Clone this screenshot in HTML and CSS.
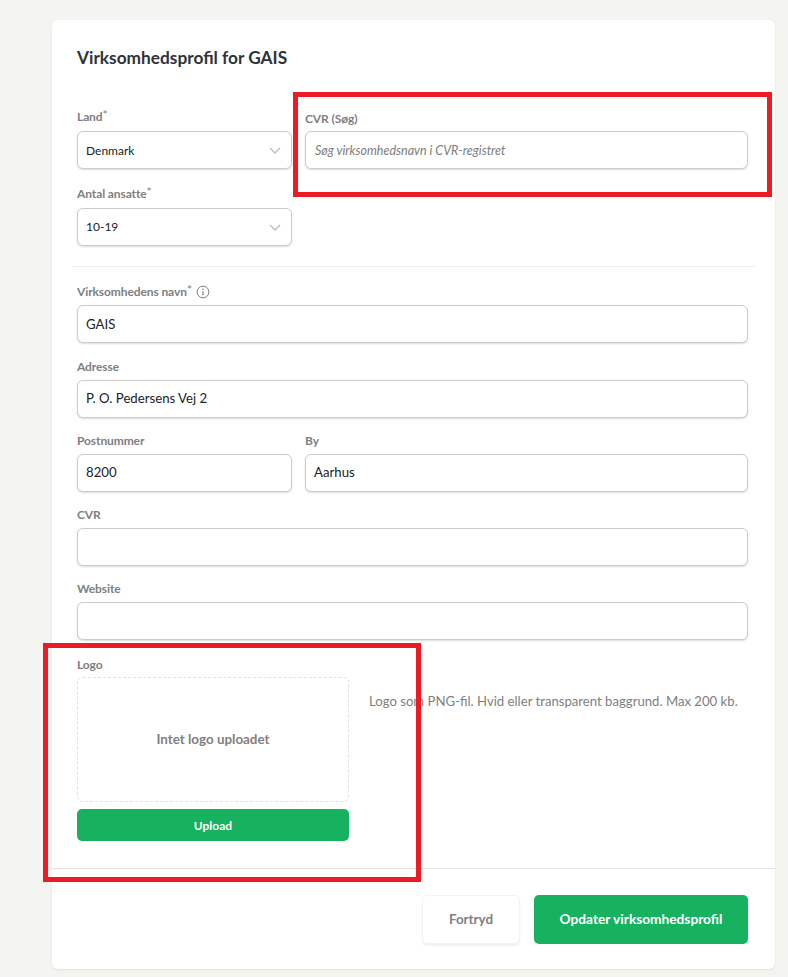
FILE: index.html
```html
<!DOCTYPE html>
<html lang="da">
<head>
<meta charset="utf-8">
<title>Virksomhedsprofil</title>
<link rel="stylesheet" href="styles.css">
</head>
<body>
<main class="card">
  <h1 class="title">Virksomhedsprofil for GAIS</h1>
  <section class="top-grid">
    <div class="field">
      <label class="label">Land<sup>*</sup></label>
      <div class="control select select-first small"><span>Denmark</span>
        <svg class="chev" viewBox="0 0 12 7" width="12" height="7"><path d="M1 1l5 5 5-5" fill="none" stroke="#bdbdbd" stroke-width="1.3"/></svg>
      </div>
    </div>
    <div class="field">
      <label class="label label-low">CVR (Søg)</label>
      <div class="control small placeholder">Søg virksomhedsnavn i CVR-registret</div>
    </div>
    <div class="field">
      <label class="label">Antal ansatte<sup>*</sup></label>
      <div class="control select small"><span>10-19</span>
        <svg class="chev" viewBox="0 0 12 7" width="12" height="7"><path d="M1 1l5 5 5-5" fill="none" stroke="#bdbdbd" stroke-width="1.3"/></svg>
      </div>
    </div>
  </section>
  <hr class="rule">
  <section class="stack">
    <div class="field field-first">
      <label class="label">Virksomhedens navn<sup>*</sup>
        <svg class="info" viewBox="0 0 14 14" width="14" height="14"><circle cx="7" cy="7" r="5.9" fill="none" stroke="#7d7d7d" stroke-width="1"/><path d="M7 6.2v4" stroke="#7d7d7d" stroke-width="1.2"/><circle cx="7" cy="4.2" r=".8" fill="#7d7d7d"/></svg>
      </label>
      <div class="control control-first">GAIS</div>
    </div>
    <div class="field">
      <label class="label">Adresse</label>
      <div class="control">P. O. Pedersens Vej 2</div>
    </div>
    <div class="pair">
      <div class="field">
        <label class="label">Postnummer</label>
        <div class="control">8200</div>
      </div>
      <div class="field">
        <label class="label">By</label>
        <div class="control">Aarhus</div>
      </div>
    </div>
    <div class="field">
      <label class="label">CVR</label>
      <div class="control"></div>
    </div>
    <div class="field">
      <label class="label">Website</label>
      <div class="control"></div>
    </div>
  </section>
  <section class="logo-row">
    <div class="logo-col">
      <label class="label">Logo</label>
      <div class="dropzone">Intet logo uploadet</div>
      <button class="upload" type="button">Upload</button>
    </div>
    <p class="hint">Logo som PNG-fil. Hvid eller transparent baggrund. Max 200 kb.</p>
  </section>
  <footer class="footer">
    <button class="btn cancel" type="button">Fortryd</button>
    <button class="btn primary" type="button">Opdater virksomhedsprofil</button>
  </footer>
  <div class="mark mark-cvr"></div>
  <div class="mark mark-logo"></div>
</main>
</body>
</html>
```
FILE: styles.css
```css
* { box-sizing: border-box; }
html, body { margin: 0; padding: 0; }
body {
  background: #f4f4f0;
  font-family: Lato, "Liberation Sans", sans-serif;
  height: 977px;
  overflow: hidden;
  padding: 20px 13px 8px 52px;
  color: #2b2b2b;
}
.card {
  background: #fff;
  border-radius: 6px;
  box-shadow: 0 1px 2px rgba(0,0,0,.08);
  height: 949px;
  padding: 28px 27px 0 25px;
}
.title {
  margin: 0;
  font-size: 17.3px;
  line-height: 20px;
  font-weight: 700;
  color: #2f3338;
}
.top-grid {
  margin-top: 42px;
  display: grid;
  grid-template-columns: 215px 443px;
  column-gap: 13px;
  row-gap: 18px;
}
.field { display: flex; flex-direction: column; }
.field-first { margin-bottom: 1px; }
.label {
  display: block;
  font-size: 12px;
  line-height: 14px;
  font-weight: 700;
  letter-spacing: -.1px;
  color: #808080;
  margin-bottom: 7px;
  white-space: nowrap;
}
.label-low { position: relative; top: 2px; }
.label sup { font-size: 12px; line-height: 0; font-weight: 400; vertical-align: 2px; }
.info { vertical-align: -3px; margin-left: 1px; }
.control {
  height: 38px;
  border: 1px solid #ccc;
  border-radius: 6px;
  background: #fff;
  box-shadow: 0 1px 2px rgba(0,0,0,.14);
  padding: 0 8px;
  font-size: 13.2px;
  line-height: 34px;
  color: #222;
}
.control-first { line-height: 36px; }
.small { font-size: 12px; }
.placeholder { font-style: italic; font-size: 12.5px; line-height: 38px; color: #7d7d7d; padding-left: 9px; }
.select { display: flex; align-items: center; justify-content: space-between; padding-right: 10px; }
.select-first span { padding-top: 2px; }
.rule {
  border: 0;
  height: 1px;
  background: #efefef;
  margin: 20px -7px 18px -5px;
}
.stack { display: flex; flex-direction: column; gap: 16px; }
.stack .label { margin-bottom: 6px; }
.pair { display: grid; grid-template-columns: 215px 443px; column-gap: 13px; }
.logo-row { display: flex; margin-top: 18px; }
.logo-col { width: 272px; flex: none; }
.logo-col .label { margin-bottom: 5px; }
.dropzone {
  height: 125px;
  border: 1px dashed #e2e2e2;
  border-radius: 6px;
  padding-bottom: 2px;
  display: flex;
  align-items: center;
  justify-content: center;
  font-size: 13.4px;
  font-weight: 700;
  color: #808080;
}
.upload {
  display: block;
  width: 100%;
  height: 32px;
  margin-top: 7px;
  border: 0;
  border-radius: 5px;
  background: #16b260;
  color: #fff;
  font: 700 12px Lato, sans-serif;
}
.hint {
  margin: 35px 0 0 20px;
  font-size: 13.15px;
  line-height: 17px;
  color: #808080;
  white-space: nowrap;
}
.footer {
  margin: 27px -27px 0 -25px;
  border-top: 1px solid #e6e6e6;
  padding: 26px 27px 0 0;
  display: flex;
  justify-content: flex-end;
  gap: 14px;
}
.btn {
  height: 49px;
  padding-bottom: 3px;
  border-radius: 5px;
  font: 700 13.7px Lato, sans-serif;
}
.cancel {
  width: 98px;
  border: 1px solid #f3f3f3;
  background: #fff;
  color: #808080;
  box-shadow: 0 2px 2px rgba(0,0,0,.06);
  font-size: 13.4px;
}
.primary { width: 214px; border: 0; background: #16b260; color: #fff; }
.mark { position: absolute; border: 5px solid #ed1c24; pointer-events: none; }
.mark-cvr { left: 293px; top: 92px; width: 479px; height: 105px; }
.mark-logo { left: 43px; top: 643px; width: 378px; height: 239px; }
```
